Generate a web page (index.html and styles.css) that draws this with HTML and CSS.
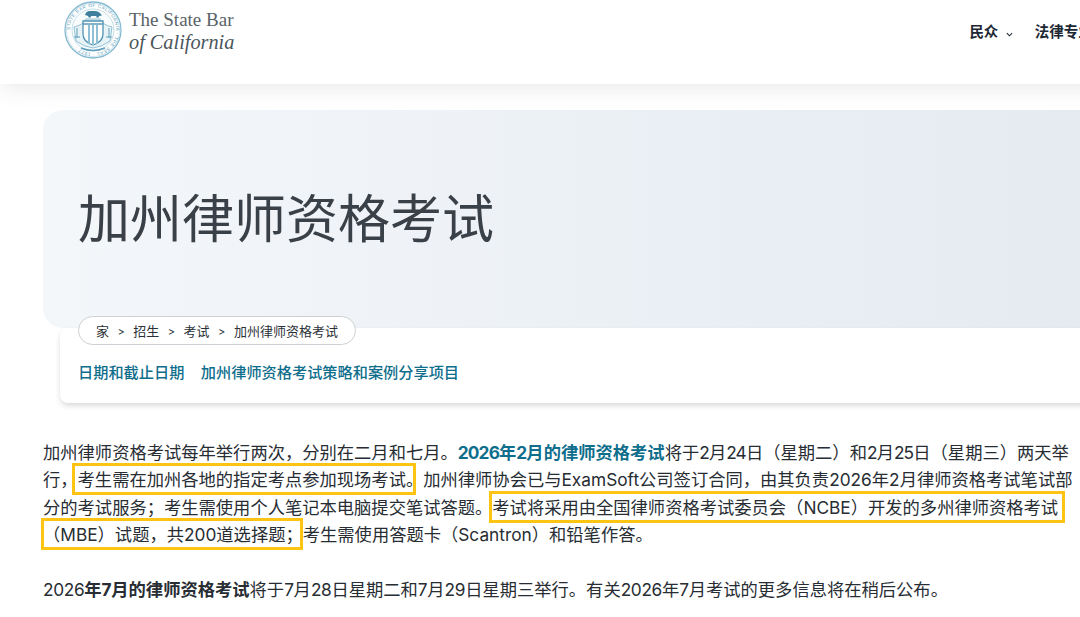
FILE: index.html
```html
<!DOCTYPE html>
<html lang="zh-CN">
<head>
  <meta charset="UTF-8" />
  <meta name="viewport" content="width=device-width, initial-scale=1.0">
  <title>加州律师资格考试</title>
  <link rel="stylesheet" href="styles.css">
</head>
<body>

  <header class="site-header">
    <a class="logo" href="#">
      <svg class="seal" viewBox="0 0 58 58" width="58" height="58">
        <defs>
          <path id="sealRing" d="M29 29 m-23 0 a23 23 0 1 1 46 0 a23 23 0 1 1 -46 0"></path>
        </defs>
        <circle cx="29" cy="29" r="28" fill="#fff" stroke="#86bad0" stroke-width="1.3"></circle>
        <circle cx="29" cy="29" r="26.6" fill="none" stroke="#b9d9e6" stroke-width="0.7"></circle>
        <circle cx="29" cy="29" r="21" fill="#f8fcfd" stroke="#b4d5e3" stroke-width="0.8"></circle>
        <text class="seal-text"><textPath href="#sealRing">STATE BAR OF CALIFORNIA · THE SEAL · 1927 ·</textPath></text>
        <path d="M21 14 q1-4 5-4 l5 0 q3 0 5 2 l2 2.5 l-3 .4 l-.4 1.6 h-2 l-.4-1.6 h-5 l-.6 1.6 h-2 l-.4-1.6 z" fill="#3d7f9d"></path>
        <path d="M10 26 q9-2 12-8 h14 q3 6 12 8 l-2 14 q-8 6-17 7 q-9-1-17-7 z" fill="#e8f3f8" stroke="#7db4cc" stroke-width="0.8"></path>
        <path d="M19 20 h20 v13 q0 8-10 11 q-10-3-10-11 z" fill="#fff" stroke="#4f93b1" stroke-width="1.3"></path>
        <path d="M25 24 v19 M29 24 v20 M33 24 v19" stroke="#8fc0d5" stroke-width="2"></path>
        <path d="M19 23 h20" stroke="#4f93b1" stroke-width="1.4"></path>
        <path d="M13 27 v10 M45 27 v10 M10 36 h6 M42 36 h6" fill="none" stroke="#5f9fbb" stroke-width="1"></path>
        <path d="M17 47 q12 5 24 0" fill="none" stroke="#5f9fbb" stroke-width="1.6"></path>
      </svg>
      <span class="logo-name">
        <span class="logo-top">The State Bar</span>
        <em class="logo-bottom">of California</em>
      </span>
    </a>
    <nav class="top-nav">
      <a href="#">民众 <svg class="caret" viewBox="0 0 8 5" width="7" height="5"><path d="M1 1l3 3 3-3" fill="none" stroke="#1d2733" stroke-width="1.2"></path></svg></a>
      <a href="#">法律专业人士</a>
    </nav>
  </header>

  <main class="page">
    <section class="hero">
      <h1>加州律师资格考试</h1>
    </section>

    <section class="sub-card">
      <ol class="crumbs">
        <li>家</li>
        <li>招生</li>
        <li>考试</li>
        <li>加州律师资格考试</li>
      </ol>
      <div class="sub-links">
        <a href="#">日期和截止日期</a>
        <a href="#">加州律师资格考试策略和案例分享项目</a>
      </div>
    </section>

    <article class="content">
      <p>加州律师资格考试每年举行两次，分别在二月和七月。<a href="#"><strong><span class="num">2026</span>年<span class="num">2</span>月的律师资格考试</strong></a>将于<span class="num">2</span>月<span class="num">24</span>日（星期二）和<span class="num">2</span>月<span class="num">25</span>日（星期三）两天举行，<span class="mark mark-onsite">考生需在加州各地的指定考点参加现场考试。</span>加州律师协会已与ExamSoft公司签订合同，由其负责2026年2月律师资格考试笔试部分的考试服务；考生需使用个人笔记本电脑提交笔试答题。<span class="mark mark-ncbe">考试将采用由全国律师资格考试委员会（NCBE）开发的多州律师资格考试</span><span class="mark mark-mbe">（MBE）试题，共200道选择题；</span>考生需使用答题卡（Scantron）和铅笔作答。</p>
      <p class="next-exam"><span class="num">2026</span><strong>年<span class="num">7</span>月的律师资格考试</strong>将于<span class="num">7</span>月<span class="num">28</span>日星期二和<span class="num">7</span>月<span class="num">29</span>日星期三举行。有关<span class="num">2026</span>年<span class="num">7</span>月考试的更多信息将在稍后公布。</p>
    </article>
  </main>

</body>
</html>
```

FILE: styles.css
```css
* {
  box-sizing: border-box;
  margin: 0;
  padding: 0;
}

html, body {
  height: 617px;
  overflow: hidden;
}

body {
  background-color: #fff;
  color: #1f2933;
  font-family: Inter, "Noto Sans CJK SC", sans-serif;
}

a {
  color: #0f6e8c;
  text-decoration: none;
}

.site-header {
  height: 84px;
  display: flex;
  padding-left: 64px;
  background-color: #fff;
  box-shadow: 0 2px 24px rgba(0,0,0,0.1);
  position: relative;
  width: 1200px;
}

.logo {
  display: flex;
  gap: 7px;
  height: 60px;
  align-items: center;
}

.seal-text {
  font-family: "Liberation Sans", sans-serif;
  font-size: 4.6px;
  letter-spacing: 0.5px;
  fill: #5c9dba;
}

.logo-name {
  display: flex;
  flex-direction: column;
  padding-top: 1px;
  font-family: "Liberation Serif", serif;
  line-height: 23px;
  color: #596368;
}

.logo-top {
  font-size: 19px;
}

.logo-bottom {
  font-size: 20.3px;
  color: #4c565b;
}

.top-nav {
  display: flex;
  gap: 22px;
  padding-top: 22px;
  margin-left: 735px;
  white-space: nowrap;
}

.top-nav a {
  color: #1d2733;
  font-size: 14.5px;
  font-weight: 700;
  line-height: 20px;
}

.caret {
  margin-left: 4px;
}

.page {
  padding: 26px 0 0 43px;
  width: 1200px;
}

.hero {
  height: 218px;
  padding: 75px 0 0 35px;
  border-radius: 20px 0 0 20px;
  background: linear-gradient(90deg, #f4f7fa 0%, #e3e9f0 100%);
}

.hero h1 {
  font-size: 52px;
  font-weight: 400;
  line-height: 70px;
  color: #3a4047;
}

.sub-card {
  margin-left: 17px;
  height: 75px;
  padding-left: 18px;
  background-color: #fff;
  border-radius: 8px 0 0 8px;
  box-shadow: 0 3px 6px -1px rgba(0,0,0,0.18);
}

.crumbs {
  display: inline-flex;
  align-items: center;
  height: 29px;
  padding: 0 17px;
  position: relative;
  top: -12px;
  list-style: none;
  font-size: 13px;
  color: #2b3138;
  background-color: #fff;
  border: 1px solid #ccd0d4;
  border-radius: 15px;
}

.crumbs li + li::before {
  content: ">";
  margin: 0 8.5px;
  font-size: 11px;
}

.sub-links {
  display: flex;
  gap: 16.5px;
  margin-top: 5px;
  font-size: 15.2px;
  font-weight: 500;
  line-height: 22px;
}

.content {
  margin-top: 36px;
  width: 1035px;
  font-size: 17.3px;
  line-height: 27.4px;
  color: #272d33;
}

.content p {
  margin-bottom: 27.4px;
}

.content strong {
  font-weight: 700;
}

.num {
  letter-spacing: -0.85px;
}

.next-exam .num {
  letter-spacing: -0.35px;
}

/* yellow annotation boxes sit over the text, they don't follow the span edges exactly */
.mark {
  position: relative;
}

.mark::after {
  content: "";
  position: absolute;
  top: -6px;
  bottom: -5px;
  border: 3px solid #fdc414;
  pointer-events: none;
}

.mark-onsite::after {
  left: -6px;
  right: 7px;
}

.mark-ncbe::after {
  left: -3px;
  right: -7px;
}

.mark-mbe::after {
  left: -2px;
  right: 0;
}
```
